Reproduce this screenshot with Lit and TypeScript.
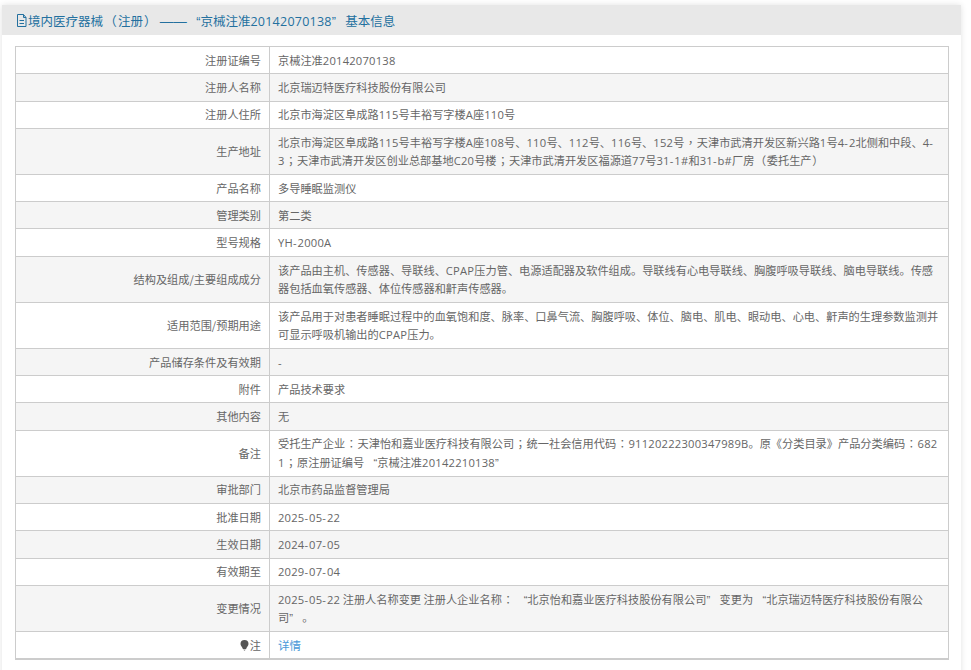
import { LitElement, html, css } from 'lit';
import { customElement } from 'lit/decorators.js';

const rows: [string, string][] = [
  ['注册证编号', '京械注准20142070138'],
  ['注册人名称', '北京瑞迈特医疗科技股份有限公司'],
  ['注册人住所', '北京市海淀区阜成路115号丰裕写字楼A座110号'],
  ['生产地址', '北京市海淀区阜成路115号丰裕写字楼A座108号、110号、112号、116号、152号，天津市武清开发区新兴路1号4-2北侧和中段、4-3；天津市武清开发区创业总部基地C20号楼；天津市武清开发区福源道77号31-1#和31-b#厂房（委托生产）'],
  ['产品名称', '多导睡眠监测仪'],
  ['管理类别', '第二类'],
  ['型号规格', 'YH-2000A'],
  ['结构及组成/主要组成成分', '该产品由主机、传感器、导联线、CPAP压力管、电源适配器及软件组成。导联线有心电导联线、胸腹呼吸导联线、脑电导联线。传感器包括血氧传感器、体位传感器和鼾声传感器。'],
  ['适用范围/预期用途', '该产品用于对患者睡眠过程中的血氧饱和度、脉率、口鼻气流、胸腹呼吸、体位、脑电、肌电、眼动电、心电、鼾声的生理参数监测并可显示呼吸机输出的CPAP压力。'],
  ['产品储存条件及有效期', '-'],
  ['附件', '产品技术要求'],
  ['其他内容', '无'],
  ['备注', '受托生产企业：天津怡和嘉业医疗科技有限公司；统一社会信用代码：91120222300347989B。原《分类目录》产品分类编码：6821；原注册证编号“京械注准20142210138”'],
  ['审批部门', '北京市药品监督管理局'],
  ['批准日期', '2025-05-22'],
  ['生效日期', '2024-07-05'],
  ['有效期至', '2029-07-04'],
  ['变更情况', '2025-05-22 注册人名称变更 注册人企业名称：“北京怡和嘉业医疗科技股份有限公司”变更为“北京瑞迈特医疗科技股份有限公司”。'],
];

// the reference font has wider latin and centred punctuation, so runs get their own class
const rich = (text: string) =>
  text.split(/([A-Za-z0-9#]+|-|[，；：（）]|“|”)/).filter(Boolean).map((t) => {
    if (t === '“') return html`<span class="ql">“</span>`;
    if (t === '”') return html`<span class="qr">”</span>`;
    if (t === '-') return html`<span class="n h">-</span>`;
    if (/^[，；：（）]$/.test(t)) return html`<span class="p">${t}</span>`;
    if (/^[A-Za-z0-9#]+$/.test(t)) return html`<span class="n">${t}</span>`;
    return t;
  });

@customElement('app-root')
export class AppRoot extends LitElement {
  static styles = css`
    :host {
      display: block;
      box-sizing: border-box;
      height: 670px;
      padding: 5px 10px 0 2px;
      font-family: "Noto Sans CJK SC", "Liberation Sans", sans-serif;
      color: #666;
      overflow: hidden;
    }
    .panel {
      box-shadow: 0 0 6px rgba(0, 0, 0, 0.12);
      height: 700px;
    }
    .head {
      box-sizing: border-box;
      display: flex;
      align-items: center;
      height: 30px;
      padding: 1px 0 0 14px;
      background: #e8e8e8;
      color: #23709f;
      font-size: 12.5px;
      line-height: 18px;
    }
    .head svg { flex: none; }
    .head .p { padding: 0 1.2px; }
    .body { padding: 11px 12px 0 13px; }
    table {
      width: 100%;
      border-collapse: collapse;
      table-layout: fixed;
      font-size: 11.2px;
      line-height: 18.7px;
      border-bottom: 2px solid #ccc;
    }
    td {
      border: 1px solid #ccc;
      padding: 3.8px 8px;
      word-break: break-all;
    }
    td.label { width: 237px; text-align: right; }
    tr:nth-child(even) td { background: #f5f5f5; }
    a { color: #4a9ad8; text-decoration: none; font-size: 11.5px; }
    .bulb { vertical-align: -1px; margin-right: 1px; }
    .n, .p, .ql, .qr, .dash { line-height: 0; }
    .n { font-family: "Open Sans", "Liberation Sans", sans-serif; letter-spacing: .02em; }
    .h { letter-spacing: 1px; }
    .p { padding: 0 .6px; font-family: "Noto Sans CJK TC", sans-serif; }
    .ql, .qr { font-family: "Liberation Sans", sans-serif; }
    .ql { padding-left: 9.400px; }
    .qr { padding-right: 9.400px; }
    .dash {
      margin-left: 2px;
      font-family: "Liberation Sans", sans-serif;
      font-size: 13.500px;
    }
  `;

  render() {
    return html`
      <div class="panel">
        <div class="head">
          <svg width="12" height="13" viewBox="0 0 12 13" fill="none" stroke="#23709f" stroke-width="1">
            <path d="M1.500 .5h6l2.500 3v9h-8.500z M7.500 .5v3h2.500 M3.500 6.500h4.500 M3.500 9.500h4.500" />
          </svg>
          <span>${rich('境内医疗器械（注册）')}<span class="dash">——</span>${rich('“京械注准20142070138”基本信息')}</span>
        </div>
        <div class="body">
          <table>
            ${rows.map(([k, v]) => html`<tr><td class="label">${k}</td><td>${rich(v)}</td></tr>`)}
            <tr>
              <td class="label">
                <svg class="bulb" width="9" height="11" viewBox="0 0 9 11">
                  <path d="M4.500 0a4 4 0 0 1 4 4c0 2-2 3-2.400 5H2.900C2.500 7 .5 6 .5 4a4 4 0 0 1 4-4z" fill="#555" />
                  <path d="M3.200 9.500h2.600L4.500 11z" fill="#888" />
                </svg>注
              </td>
              <td><a href="#">详情</a></td>
            </tr>
          </table>
        </div>
      </div>
    `;
  }
}
